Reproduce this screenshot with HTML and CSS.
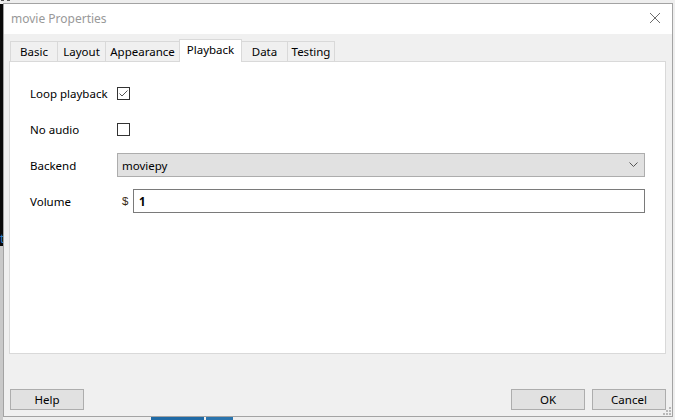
FILE: index.html
```html
<!DOCTYPE html>
<html>
<head>
<meta charset="utf-8">
<link rel="stylesheet" href="styles.css">
</head>
<body>
<div class="desktop">
  <div class="bg-left"></div>
  <div class="bg-left-low"></div>
  <div class="bg-top-mark"></div>
  <div class="bg-blue1"></div>
  <div class="bg-blue2"></div>
  <span class="bg-t">t</span>

  <div class="dialog">
    <div class="titlebar">
      <span class="title">movie Properties</span>
      <svg class="close" width="12" height="12" viewBox="0 0 12 12"><path d="M1 1L11 11M11 1L1 11" stroke="#6d6d6d" stroke-width="1"/></svg>
    </div>
    <div class="tabs">
      <div class="tab w-basic">Basic</div>
      <div class="tab w-layout">Layout</div>
      <div class="tab w-appear">Appearance</div>
      <div class="tab active">Playback</div>
      <div class="tab w-data">Data</div>
      <div class="tab w-test">Testing</div>
    </div>
    <div class="panel">
      <div class="row">
        <span class="label">Loop playback</span>
        <span class="check">
          <svg width="11" height="11" viewBox="0 0 11 11"><path d="M1.5 5.5L4 8L9.5 2.5" fill="none" stroke="#555" stroke-width="1"/></svg>
        </span>
      </div>
      <div class="row">
        <span class="label">No audio</span>
        <span class="check"></span>
      </div>
      <div class="row">
        <span class="label">Backend</span>
        <div class="combo">
          <span>moviepy</span>
          <svg width="9" height="6" viewBox="0 0 9 6"><path d="M0.5 0.5L4.5 4.5L8.5 0.5" fill="none" stroke="#555" stroke-width="1"/></svg>
        </div>
      </div>
      <div class="row">
        <span class="label">Volume</span>
        <span class="dollar">$</span>
        <div class="input">1</div>
      </div>
    </div>
    <div class="footer">
      <div class="btn">Help</div>
      <div class="spacer"></div>
      <div class="btn">OK</div>
      <div class="btn">Cancel</div>
    </div>
    <svg class="grip" width="9" height="9" viewBox="0 0 9 9">
      <rect x="7" y="1" width="2" height="2" fill="#b8b8b8"/>
      <rect x="4" y="4" width="2" height="2" fill="#b8b8b8"/>
      <rect x="7" y="4" width="2" height="2" fill="#b8b8b8"/>
      <rect x="1" y="7" width="2" height="2" fill="#b8b8b8"/>
      <rect x="4" y="7" width="2" height="2" fill="#b8b8b8"/>
      <rect x="7" y="7" width="2" height="2" fill="#b8b8b8"/>
    </svg>
  </div>
</div>
</body>
</html>
```

FILE: styles.css
```css
html, body {
  margin: 0;
  padding: 0;
}
body {
  font-family: "Segoe UI", "Noto Sans", "Open Sans", sans-serif;
  font-size: 11.5px;
  color: #000;
  background: #ececec;
}
.desktop {
  position: relative;
  width: 675px;
  height: 420px;
  overflow: hidden;
  background: #eeeeee;
}
.bg-left {
  position: absolute;
  left: 0;
  top: 4px;
  width: 3px;
  height: 242px;
  background: #0a0a0a;
}
.bg-left-low {
  position: absolute;
  left: 0;
  top: 246px;
  width: 3px;
  height: 174px;
  background: #c9c9c9;
}
.bg-top-mark {
  position: absolute;
  left: 1px;
  top: 0;
  width: 9px;
  height: 1px;
  border-top: 1px dashed #555;
}
.bg-blue1 {
  position: absolute;
  left: 151px;
  top: 417px;
  width: 53px;
  height: 3px;
  background: #1f6aa5;
}
.bg-blue2 {
  position: absolute;
  left: 206px;
  top: 417px;
  width: 27px;
  height: 3px;
  background: #2a74ad;
}
.bg-t {
  position: absolute;
  left: 0;
  top: 232px;
  font-size: 12px;
  line-height: 14px;
  color: #2f7fc1;
}

.dialog {
  position: absolute;
  left: 3px;
  top: 3px;
  width: 670px;
  height: 414px;
  box-sizing: border-box;
  border: 1px solid #a3a3a3;
  background: #f0f0f0;
  display: flex;
  flex-direction: column;
}
.titlebar {
  height: 30px;
  background: #fff;
  display: flex;
  align-items: center;
  justify-content: space-between;
  padding: 0 11px 0 7px;
  flex: none;
}
.title {
  color: #999;
  font-size: 12px;
  margin-top: -2px;
}
.close {
  margin-top: -2px;
}
.tabs {
  margin-top: 5px;
  margin-left: 6px;
  height: 22px;
  display: flex;
  align-items: flex-end;
  flex: none;
}
.tab {
  box-sizing: border-box;
  height: 20px;
  border: 1px solid #d9d9d9;
  border-bottom: none;
  margin-left: -1px;
  display: flex;
  align-items: center;
  justify-content: center;
  background: #f0f0f0;
}
.tab:first-child {
  margin-left: 0;
}
.w-basic { width: 48px; }
.w-layout { width: 49px; }
.w-appear { width: 75px; }
.w-data { width: 47px; }
.w-test { width: 48px; }
.tab.active {
  width: 63px;
  height: 23px;
  margin-bottom: -1px;
  background: #fff;
  position: relative;
  z-index: 1;
  align-items: flex-start;
  padding-top: 2px;
}
.panel {
  box-sizing: border-box;
  height: 293px;
  margin: 0 6px 0 5px;
  border: 1px solid #d9d9d9;
  background: #fff;
  padding: 19px 20px 0 20px;
  display: flex;
  flex-direction: column;
  gap: 12px;
  flex: none;
}
.row {
  height: 24px;
  display: flex;
  align-items: center;
}
.label {
  width: 87px;
  flex: none;
}
.check {
  box-sizing: border-box;
  width: 13px;
  height: 13px;
  border: 1px solid #333;
  background: #fff;
  display: flex;
  align-items: center;
  justify-content: center;
}
.combo {
  box-sizing: border-box;
  flex: 1;
  height: 24px;
  background: #e1e1e1;
  border: 1px solid #adadad;
  display: flex;
  align-items: center;
  justify-content: space-between;
  padding: 0 6px 0 4px;
}
.dollar {
  margin-left: 5px;
  width: 11px;
  flex: none;
  font-family: "Liberation Sans", sans-serif;
  color: #3a2a10;
}
.input {
  box-sizing: border-box;
  flex: 1;
  height: 24px;
  border: 1px solid #7a7a7a;
  background: #fff;
  display: flex;
  align-items: center;
  padding-left: 5px;
  font-weight: bold;
}
.footer {
  margin-top: 35px;
  padding: 0 6px 0 6px;
  display: flex;
  gap: 7px;
  flex: none;
}
.spacer {
  flex: 1;
}
.btn {
  box-sizing: border-box;
  width: 74px;
  height: 21px;
  background: #e1e1e1;
  border: 1px solid #adadad;
  display: flex;
  align-items: center;
  justify-content: center;
}
.grip {
  position: absolute;
  right: 1px;
  bottom: 1px;
}
```
